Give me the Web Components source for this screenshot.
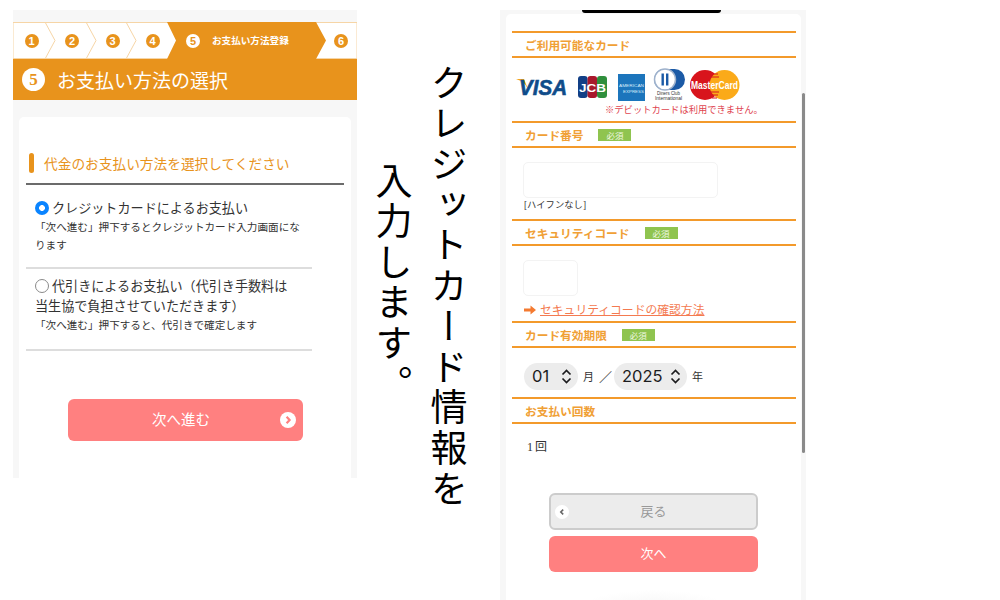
<!DOCTYPE html>
<html lang="ja">
<head>
<meta charset="utf-8">
<title>クレジットカード情報を入力します。</title>
<style>
    html, body { margin: 0; height: 100%; background: #fff; }
    body {
        overflow: hidden;
        font-family: "Liberation Serif", "Noto Sans CJK JP", serif;
    }
    #page {
        display: flex;
        align-items: flex-start;
        width: 1000px;
        height: 600px;
        padding-left: 13px;
        box-sizing: border-box;
    }
</style>
</head>
<body>
<div id="page">
    <checkout-screen>
        <step-bar></step-bar>
        <title-band>お支払い方法の選択</title-band>
        <white-card>
            <accent-heading>代金のお支払い方法を選択してください</accent-heading>
            <pay-option checked label="クレジットカードによるお支払い" note="「次へ進む」押下するとクレジットカード入力画面になります"></pay-option>
            <pay-option label="代引きによるお支払い（代引き手数料は当生協で負担させていただきます）" note="「次へ進む」押下すると、代引きで確定します"></pay-option>
            <action-button variant="large">次へ進む</action-button>
        </white-card>
    </checkout-screen>

    <side-caption>クレジットカード情報を<br>入力します。</side-caption>

    <card-screen></card-screen>
</div>

<script>
    // left phone shell
    class CheckoutScreen extends HTMLElement {
        connectedCallback() {
            const shadow = this.attachShadow({ mode: "open" });
            shadow.innerHTML = `
                <style>
                    :host {
                        display: flex;
                        flex-direction: column;
                        flex: none;
                        width: 344px;
                        height: 468px;
                        margin-top: 10px;
                        padding-top: 12px;
                        box-sizing: border-box;
                        background: #f7f7f7;
                        overflow: hidden;
                    }
                </style>
                <slot></slot>
            `;
        }
    }

    class StepBar extends HTMLElement {
        connectedCallback() {
            const shadow = this.attachShadow({ mode: "open" });
            const chevrons = [32, 73, 113].map(x =>
                `<path d="M${x} 0 L${x + 10} 18.5 L${x} 37" fill="none" stroke="#f6d5a6" stroke-width="1"/>`
            ).join("");
            const dot = (n, width) => `<span class="cell" style="width:${width}px"><b>${n}</b></span>`;
            shadow.innerHTML = `
                <style>
                    :host { display: grid; height: 37px; flex: none; background: #fff; }
                    svg, .row { grid-area: 1 / 1; }
                    svg { display: block; }
                    .row { display: flex; align-items: center; }
                    .cell { display: flex; justify-content: center; flex: none; }
                    b {
                        display: block;
                        width: 14px;
                        height: 14px;
                        border-radius: 50%;
                        background: #e8931c;
                        color: #fff;
                        font: 700 11px/14px "Liberation Sans", sans-serif;
                        text-align: center;
                    }
                    .active { display: flex; align-items: center; flex: none; width: 150px; }
                    .active b { background: #fff; color: #e8931c; flex: none; margin-left: 12px; }
                    .active span {
                        margin-left: 12px;
                        color: #fff;
                        font: 700 9.6px/1 "Noto Sans CJK JP", sans-serif;
                        white-space: nowrap;
                    }
                </style>
                <svg width="344" height="37" viewBox="0 0 344 37">
                    <path d="M0 .5H344V36.5H0Z" fill="none" stroke="#f6d5a6"/>
                    ${chevrons}
                    <path d="M154 0H303L313 18.5L303 37H154L163 18.5Z" fill="#e8931c"/>
                </svg>
                <div class="row">
                    ${dot(1, 37)}${dot(2, 44)}${dot(3, 37)}${dot(4, 43)}
                    <div class="active"><b>5</b><span>お支払い方法登録</span></div>
                    ${dot(6, 34)}
                </div>
            `;
        }
    }

    class TitleBand extends HTMLElement {
        connectedCallback() {
            const shadow = this.attachShadow({ mode: "open" });
            shadow.innerHTML = `
                <style>
                    :host {
                        display: flex;
                        align-items: center;
                        flex: none;
                        height: 41px;
                        padding-left: 9px;
                        background: #e8931c;
                        color: #fff;
                        font-size: 19px;
                        box-sizing: border-box;
                    }
                    b {
                        width: 23px;
                        height: 23px;
                        margin-right: 12px;
                        border-radius: 50%;
                        background: #fff;
                        color: #e8931c;
                        font: 700 17px/23px "Liberation Serif", serif;
                        text-align: center;
                    }
                </style>
                <b>5</b><slot></slot>
            `;
        }
    }

    class WhiteCard extends HTMLElement {
        connectedCallback() {
            const shadow = this.attachShadow({ mode: "open" });
            shadow.innerHTML = `
                <style>
                    :host {
                        display: block;
                        flex: 1;
                        margin: 17px 6px 0;
                        padding: 36px 7px 0;
                        background: #fff;
                        border-radius: 5px 5px 0 0;
                    }
                </style>
                <slot></slot>
            `;
        }
    }

    class AccentHeading extends HTMLElement {
        connectedCallback() {
            const shadow = this.attachShadow({ mode: "open" });
            shadow.innerHTML = `
                <style>
                    :host {
                        display: flex;
                        align-items: center;
                        height: 32px;
                        box-sizing: border-box;
                        padding: 0 0 11px 3px;
                        border-bottom: 2px solid #6b6b6b;
                        color: #e8931c;
                        font-size: 13.7px;
                        white-space: nowrap;
                    }
                    i {
                        width: 5px;
                        height: 20px;
                        margin-right: 10px;
                        border-radius: 3px;
                        background: #e8931c;
                    }
                </style>
                <i></i><slot></slot>
            `;
        }
    }

    class PayOption extends HTMLElement {
        connectedCallback() {
            const shadow = this.attachShadow({ mode: "open" });
            const checked = this.hasAttribute("checked");
            shadow.innerHTML = `
                <style>
                    :host {
                        display: block;
                        width: 286px;
                        padding: 8px 0 14px 9px;
                        box-sizing: border-box;
                        border-bottom: 2px solid #ddd;
                        color: #333;
                    }
                    :host([checked]) { padding: 14px 0 12px 9px; }
                    .label { font-size: 13.1px; line-height: 20px; margin-right: 13px; }
                    .note { font-size: 10.6px; line-height: 18px; color: #333; margin-right: 8px; }
                    i {
                        display: inline-block;
                        width: 14px;
                        height: 14px;
                        margin-right: 3px;
                        border-radius: 50%;
                        box-sizing: border-box;
                        vertical-align: -2px;
                    }
                    i.on { background: radial-gradient(circle, #fff 0 2.6px, #0a84ff 3.2px); }
                    i.off { border: 1.5px solid #8a8a8a; }
                </style>
                <div class="label"><i class="${checked ? "on" : "off"}"></i>${this.getAttribute("label")}</div>
                <div class="note">${this.getAttribute("note")}</div>
            `;
        }
    }

    class ActionButton extends HTMLElement {
        connectedCallback() {
            const shadow = this.attachShadow({ mode: "open" });
            const variant = this.getAttribute("variant");
            const icon = {
                large: `<svg class="end" width="16" height="16" viewBox="0 0 16 16"><circle cx="8" cy="8" r="8" fill="#fff"/><path d="M6.6 4.8 9.6 8 6.6 11.2" fill="none" stroke="#ff8080" stroke-width="2.2"/></svg>`,
                back: `<svg class="start" width="14" height="14" viewBox="0 0 14 14"><circle cx="7" cy="7" r="7" fill="#fff"/><path d="M8.2 4.6 5.8 7 8.2 9.4" fill="none" stroke="#666" stroke-width="1.6"/></svg>`
            }[variant] || "";
            shadow.innerHTML = `
                <style>
                    :host {
                        display: flex;
                        align-items: center;
                        justify-content: center;
                        position: relative;
                        box-sizing: border-box;
                        width: 209px;
                        height: 36px;
                        padding-bottom: 3px;
                        border-radius: 6px;
                        background: #ff8080;
                        color: #fff;
                        font-family: "Noto Sans CJK JP", sans-serif;
                        font-size: 13px;
                    }
                    :host([variant="large"]) {
                        width: 235px;
                        height: 42px;
                        margin: 48px 0 0 42px;
                        padding-right: 9px;
                        font-size: 14.5px;
                    }
                    :host([variant="back"]) {
                        height: 37px;
                        background: #ececec;
                        border: 2px solid #ccc;
                        color: #999;
                    }
                    svg { position: absolute; top: 50%; transform: translateY(-50%); }
                    .end { right: 7px; }
                    .start { left: 4px; }
                </style>
                ${icon}<slot></slot>
            `;
        }
    }

    class SideCaption extends HTMLElement {
        connectedCallback() {
            const shadow = this.attachShadow({ mode: "open" });
            shadow.innerHTML = `
                <style>
                    :host {
                        display: block;
                        flex: none;
                        width: 110px;
                        height: 440px;
                        margin: 64px 24px 0 9px;
                        writing-mode: vertical-rl;
                        text-align: center;
                        color: #000;
                        font-family: "Noto Sans CJK JP", sans-serif;
                        font-size: 37px;
                        letter-spacing: 3.6px;
                        line-height: 55px;
                        white-space: nowrap;
                    }
                </style>
                <slot></slot>
            `;
        }
    }

    class OrangeHead extends HTMLElement {
        connectedCallback() {
            const shadow = this.attachShadow({ mode: "open" });
            const required = this.hasAttribute("required");
            shadow.innerHTML = `
                <style>
                    :host {
                        display: flex;
                        align-items: center;
                        height: 27px;
                        padding-left: 13px;
                        box-sizing: border-box;
                        border-top: 2px solid #f39a2b;
                        border-bottom: 2px solid #f39a2b;
                        color: #f0a035;
                        font-size: 11.7px;
                        font-weight: 700;
                        white-space: nowrap;
                    }
                    b {
                        width: 33px;
                        height: 12px;
                        margin-left: 15px;
                        background: #8fc44f;
                        color: #eef7e0;
                        font: 400 8.5px/12px "Noto Sans CJK JP", sans-serif;
                        text-align: center;
                    }
                </style>
                <slot></slot>${required ? "<b>必須</b>" : ""}
            `;
        }
    }

    class CardLogos extends HTMLElement {
        connectedCallback() {
            const shadow = this.attachShadow({ mode: "open" });
            // svg origin sits at page x 512, y 58
            shadow.innerHTML = `
                <style>
                    :host { display: block; height: 46px; }
                    svg { display: block; }
                    text { font-family: "Liberation Sans", sans-serif; }
                </style>
                <svg width="240" height="46" viewBox="512 58 240 46">
                    <path d="M516 79 L524 79 L528 89 Q524 81 516 79Z" fill="#f2a31c"/>
                    <text x="519" y="95" font-size="22" font-weight="700" font-style="italic" fill="#0f4c8a" stroke="#0f4c8a" stroke-width=".6" textLength="48" lengthAdjust="spacingAndGlyphs">VISA</text>

                    <rect x="578" y="76" width="9.6" height="22" rx="3" fill="#123f86"/>
                    <rect x="587.5" y="76" width="9.6" height="22" rx="3" fill="#a8182c"/>
                    <rect x="597" y="76" width="10" height="22" rx="3" fill="#2f8f3c"/>
                    <text x="579" y="92" font-size="11.5" font-weight="700" fill="#fff" textLength="27" lengthAdjust="spacingAndGlyphs">JCB</text>

                    <rect x="618" y="74" width="27" height="27" fill="#1c75bc"/>
                    <text x="619" y="87" font-size="4.4" fill="#d9ecfa" textLength="25" lengthAdjust="spacingAndGlyphs">AMERICAN</text>
                    <text x="623" y="93" font-size="4.4" fill="#d9ecfa" textLength="21" lengthAdjust="spacingAndGlyphs">EXPRESS</text>

                    <rect x="654" y="69" width="31" height="21" rx="10.5" fill="#1b5aa6"/>
                    <circle cx="665" cy="79.5" r="10.5" fill="#fff" stroke="#9fb2cc" stroke-width="1.5"/>
                    <rect x="661.5" y="73.5" width="2.4" height="12" fill="#1b5aa6"/>
                    <rect x="666" y="73.5" width="2.4" height="12" fill="#1b5aa6"/>
                    <text x="657" y="95" font-size="5" fill="#333" textLength="23" lengthAdjust="spacingAndGlyphs">Diners Club</text>
                    <text x="655" y="99.5" font-size="5" fill="#333" textLength="27" lengthAdjust="spacingAndGlyphs">International</text>

                    <circle cx="705" cy="85" r="15" fill="#d8141c"/>
                    <circle cx="724.5" cy="85" r="15" fill="#fbaa19"/>
                    <path d="M712 74h6M711 77h8M710 92h9M711 95h7M712 98h5" stroke="#d8141c" stroke-width="1.2"/>
                    <text x="691" y="89" font-size="11" font-weight="700" fill="#fff" textLength="47" lengthAdjust="spacingAndGlyphs">MasterCard</text>
                </svg>
            `;
        }
    }

    class PillSelect extends HTMLElement {
        connectedCallback() {
            const shadow = this.attachShadow({ mode: "open" });
            shadow.innerHTML = `
                <style>
                    :host {
                        display: inline-flex;
                        align-items: center;
                        justify-content: space-between;
                        flex: none;
                        height: 27px;
                        padding: 0 6px 0 8px;
                        box-sizing: border-box;
                        border-radius: 13.5px;
                        background: #ececec;
                        color: #1c1c1e;
                        font: 400 16.5px/27px Inter, sans-serif;
                    }
                </style>
                <slot></slot>
                <svg width="11" height="15" viewBox="0 0 11 15">
                    <path d="M1.5 5.5 5.5 1.5 9.5 5.5M1.5 9.5 5.5 13.5 9.5 9.5" fill="none" stroke="#1c1c1e" stroke-width="1.7"/>
                </svg>
            `;
        }
    }

    class CardScreen extends HTMLElement {
        connectedCallback() {
            const shadow = this.attachShadow({ mode: "open" });
            shadow.innerHTML = `
                <style>
                    :host {
                        display: block;
                        position: relative;
                        flex: none;
                        width: 306px;
                        height: 590px;
                        margin-top: 10px;
                        padding: 4px 5px 0 6px;
                        box-sizing: border-box;
                        background: #f7f7f7;
                    }
                    .notch {
                        position: absolute;
                        left: 82px;
                        top: 0;
                        width: 139px;
                        height: 3px;
                        border-radius: 0 0 7px 7px;
                        background: #000;
                    }
                    .scroll {
                        position: absolute;
                        left: 302px;
                        top: 83px;
                        width: 3px;
                        height: 360px;
                        border-radius: 2px;
                        background: #8a8a8a;
                    }
                    .sheet {
                        height: 586px;
                        padding: 17px 5px 0 6px;
                        box-sizing: border-box;
                        background: #fff;
                        border-radius: 5px 5px 0 0;
                        color: #333;
                    }
                    .first { height: 63px; }
                    .debit {
                        margin-left: 93px;
                        color: #e0444f;
                        font-size: 9.3px;
                        line-height: 12px;
                        white-space: nowrap;
                    }
                    .field {
                        border: 1px solid #f3f3f3;
                        border-radius: 5px;
                        height: 36px;
                        box-sizing: border-box;
                        margin-left: 11px;
                    }
                    .number { height: 71px; padding-top: 14px; box-sizing: border-box; }
                    .number .field { width: 195px; }
                    .hint { margin: 1px 0 0 12px; font-size: 9.3px; line-height: 13px; }
                    .cvc { height: 75px; padding-top: 14px; box-sizing: border-box; }
                    .cvc .field { width: 55px; }
                    .link {
                        display: flex;
                        align-items: center;
                        margin: 6px 0 0 12px;
                        color: #f47a50;
                        font-size: 11.8px;
                        line-height: 16px;
                        text-decoration: underline;
                        white-space: nowrap;
                    }
                    .link svg { margin-right: 4px; }
                    .expiry {
                        display: flex;
                        align-items: center;
                        height: 49px;
                        padding: 7px 0 0 12px;
                        box-sizing: border-box;
                        font-size: 11px;
                    }
                    .count {
                        height: 69px;
                        padding: 13px 0 0 15px;
                        box-sizing: border-box;
                        font-size: 12px;
                        letter-spacing: 2px;
                        line-height: 20px;
                    }
                    .buttons {
                        display: flex;
                        flex-direction: column;
                        align-items: center;
                        gap: 6px;
                        margin-right: 1px;
                    }
                    .glow {
                        width: 150px;
                        height: 18px;
                        margin: 18px auto 0;
                        background: radial-gradient(ellipse at bottom, #f6f6f6, #fff 70%);
                    }
                </style>
                <div class="sheet">
                    <orange-head>ご利用可能なカード</orange-head>
                    <div class="first">
                        <card-logos></card-logos>
                        <div class="debit">※デビットカードは利用できません。</div>
                    </div>
                    <orange-head required>カード番号</orange-head>
                    <div class="number">
                        <div class="field"></div>
                        <div class="hint">[ハイフンなし]</div>
                    </div>
                    <orange-head required>セキュリティコード</orange-head>
                    <div class="cvc">
                        <div class="field"></div>
                        <div class="link">
                            <svg width="12" height="10" viewBox="0 0 12 10"><path d="M0 3.6H6.5V0.5L12 5 6.5 9.5V6.4H0Z" fill="#f47a30"/></svg>
                            セキュリティコードの確認方法
                        </div>
                    </div>
                    <orange-head required>カード有効期限</orange-head>
                    <div class="expiry">
                        <pill-select style="width:54px">01</pill-select>
                        <span style="margin:0 5px">月</span>
                        <span style="margin-right:2px;font-size:13px">／</span>
                        <pill-select style="width:73px">2025</pill-select>
                        <span style="margin-left:5px">年</span>
                    </div>
                    <orange-head>お支払い回数</orange-head>
                    <div class="count">1回</div>
                    <div class="buttons">
                        <action-button variant="back">戻る</action-button>
                        <action-button>次へ</action-button>
                    </div>
                    <div class="glow"></div>
                </div>
                <div class="notch"></div>
                <div class="scroll"></div>
            `;
        }
    }

    customElements.define("checkout-screen", CheckoutScreen);
    customElements.define("step-bar", StepBar);
    customElements.define("title-band", TitleBand);
    customElements.define("white-card", WhiteCard);
    customElements.define("accent-heading", AccentHeading);
    customElements.define("pay-option", PayOption);
    customElements.define("action-button", ActionButton);
    customElements.define("side-caption", SideCaption);
    customElements.define("orange-head", OrangeHead);
    customElements.define("card-logos", CardLogos);
    customElements.define("pill-select", PillSelect);
    customElements.define("card-screen", CardScreen);
</script>
</body>
</html>
